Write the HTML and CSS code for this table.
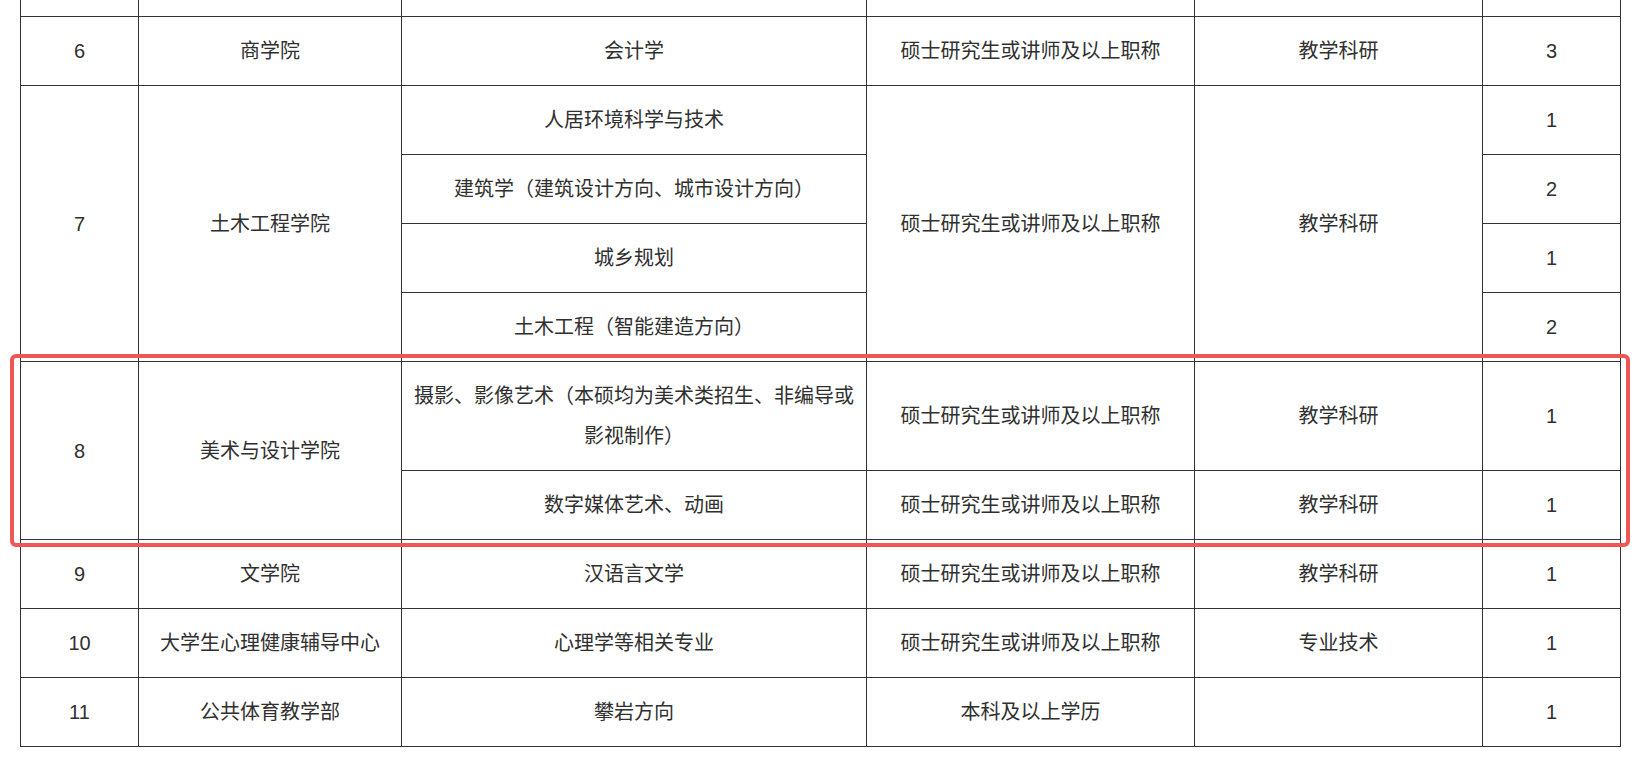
FILE: index.html
```html
<!DOCTYPE html>
<html lang="zh-CN">
<head>
<meta charset="utf-8">
<title>岗位表</title>
<link rel="stylesheet" href="styles.css">
</head>
<body>
<div class="page">
  <table class="jobs">
    <colgroup>
      <col class="c1"><col class="c2"><col class="c3"><col class="c4"><col class="c5"><col class="c6">
    </colgroup>
    <tbody>
      <tr class="stub"><td></td><td></td><td></td><td></td><td></td><td></td></tr>
      <tr><td>6</td><td>商学院</td><td>会计学</td><td>硕士研究生或讲师及以上职称</td><td>教学科研</td><td>3</td></tr>
      <tr><td rowspan="4">7</td><td rowspan="4">土木工程学院</td><td>人居环境科学与技术</td><td rowspan="4">硕士研究生或讲师及以上职称</td><td rowspan="4">教学科研</td><td>1</td></tr>
      <tr><td>建筑学（建筑设计方向、城市设计方向）</td><td>2</td></tr>
      <tr><td>城乡规划</td><td>1</td></tr>
      <tr><td>土木工程（智能建造方向）</td><td>2</td></tr>
      <tr><td rowspan="2">8</td><td rowspan="2">美术与设计学院</td><td>摄影、影像艺术（本硕均为美术类招生、非编导或影视制作）</td><td>硕士研究生或讲师及以上职称</td><td>教学科研</td><td>1</td></tr>
      <tr><td>数字媒体艺术、动画</td><td>硕士研究生或讲师及以上职称</td><td>教学科研</td><td>1</td></tr>
      <tr><td>9</td><td>文学院</td><td>汉语言文学</td><td>硕士研究生或讲师及以上职称</td><td>教学科研</td><td>1</td></tr>
      <tr><td>10</td><td>大学生心理健康辅导中心</td><td>心理学等相关专业</td><td>硕士研究生或讲师及以上职称</td><td>专业技术</td><td>1</td></tr>
      <tr><td>11</td><td>公共体育教学部</td><td>攀岩方向</td><td>本科及以上学历</td><td></td><td>1</td></tr>
    </tbody>
  </table>
  <div class="highlight"></div>
</div>
</body>
</html>
```
FILE: styles.css
```css
html, body {
  margin: 0;
  padding: 0;
  background: #ffffff;
}
.page {
  position: relative;
  width: 1640px;
  height: 758px;
  overflow: hidden;
  padding-left: 20px;
  box-sizing: border-box;
}
.jobs {
  border-collapse: collapse;
  table-layout: fixed;
  width: 1600px;
  font-family: "Liberation Sans", "Noto Sans CJK SC", sans-serif;
  font-size: 20px;
  color: #303030;
}
.c1 { width: 118px; }
.c2 { width: 263px; }
.c3 { width: 465px; }
.c4 { width: 328px; }
.c5 { width: 288px; }
.c6 { width: 138px; }
.jobs td {
  border: 1.4px solid #333333;
  text-align: center;
  vertical-align: middle;
  line-height: 40px;
  padding: 14px 10px 14px 10px;
}
.jobs .stub td {
  border-top: none;
  height: 16px;
  padding: 0;
  line-height: 16px;
}
.highlight {
  position: absolute;
  left: 10px;
  top: 354px;
  width: 1620px;
  height: 193px;
  box-sizing: border-box;
  border: 4px solid #ef5656;
  border-radius: 6px;
  pointer-events: none;
}
```
